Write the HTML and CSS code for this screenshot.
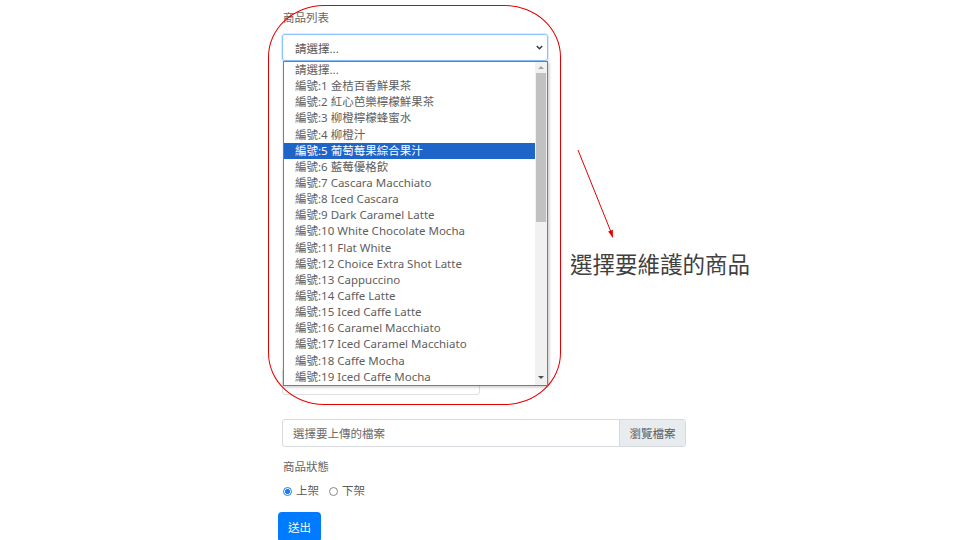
FILE: index.html
```html
<!DOCTYPE html>
<html lang="zh-Hant">
<head>
<meta charset="utf-8">
<title>商品維護</title>
<link rel="stylesheet" href="styles.css">
</head>
<body>
<main class="page">
  <form class="form">
    <label class="label label-top">商品列表</label>
    <div class="select-wrap">
      <div class="select">
        <span>請選擇...</span>
        <svg class="chev" width="7" height="5" viewBox="0 0 7 5"><path d="M0.8 1l2.7 2.7 2.7-2.7" fill="none" stroke="#343a40" stroke-width="1.5"/></svg>
      </div>
      <div class="dropdown">
        <ul class="options">
          <li>請選擇...</li>
          <li>編號:1 金桔百香鮮果茶</li>
          <li>編號:2 紅心芭樂檸檬鮮果茶</li>
          <li>編號:3 柳橙檸檬蜂蜜水</li>
          <li>編號:4 柳橙汁</li>
          <li class="selected">編號:5 葡萄莓果綜合果汁</li>
          <li>編號:6 藍莓優格飲</li>
          <li>編號:7 Cascara Macchiato</li>
          <li>編號:8 Iced Cascara</li>
          <li>編號:9 Dark Caramel Latte</li>
          <li>編號:10 White Chocolate Mocha</li>
          <li>編號:11 Flat White</li>
          <li>編號:12 Choice Extra Shot Latte</li>
          <li>編號:13 Cappuccino</li>
          <li>編號:14 Caffe Latte</li>
          <li>編號:15 Iced Caffe Latte</li>
          <li>編號:16 Caramel Macchiato</li>
          <li>編號:17 Iced Caramel Macchiato</li>
          <li>編號:18 Caffe Mocha</li>
          <li>編號:19 Iced Caffe Mocha</li>
        </ul>
        <div class="scrollbar">
          <span class="sb-arrow sb-up"></span>
          <span class="sb-thumb"></span>
          <span class="sb-arrow sb-down"></span>
        </div>
      </div>
    </div>
    <div class="covered-input"></div>
    <div class="file">
      <span class="file-text">選擇要上傳的檔案</span>
      <span class="file-btn">瀏覽檔案</span>
    </div>
    <label class="label label-status">商品狀態</label>
    <div class="radios">
      <label class="radio"><span class="dot checked"></span>上架</label>
      <label class="radio"><span class="dot"></span>下架</label>
    </div>
    <button type="button" class="submit">送出</button>
  </form>
  <div class="callout"></div>
  <svg class="pointer" width="960" height="540" viewBox="0 0 960 540">
    <line x1="578" y1="150" x2="610.6" y2="231" stroke="#e60000" stroke-width="1"/>
    <polygon points="613,238 612.8,229.8 608.2,231.6" fill="#e60000"/>
  </svg>
  <p class="caption">選擇要維護的商品</p>
</main>
</body>
</html>
```
FILE: styles.css
```css
* { box-sizing: border-box; }
html, body { margin: 0; padding: 0; background: #fff; }
body {
  font-family: "Noto Sans", "Noto Sans CJK TC", sans-serif;
  color: #555;
  width: 960px;
  height: 540px;
  overflow: hidden;
}
.page { position: relative; width: 960px; height: 540px; }
.form {
  display: flex;
  flex-direction: column;
  align-items: flex-start;
  padding-left: 282px;
}
.label {
  font-size: 11.5px;
  line-height: 16px;
  color: #666;
  padding-left: 1px;
}
.label-top { margin-top: 10px; }
.select-wrap {
  position: relative;
  margin-top: 8px;
  width: 266px;
  height: 27px;
}
.select {
  height: 27px;
  border: 1px solid #8cc3ff;
  border-radius: 3px;
  box-shadow: 0 0 0 1px rgba(140, 195, 255, 0.35);
  display: flex;
  align-items: center;
  justify-content: space-between;
  padding: 0 4px 0 12px;
  font-size: 11.5px;
  color: #555;
}
.chev { display: block; }
.dropdown {
  position: absolute;
  top: 27px;
  left: 1px;
  width: 265px;
  height: 325px;
  border: 1px solid #7d7d7d;
  background: #fff;
  display: flex;
  box-shadow: 1px 1px 3px rgba(0, 0, 0, 0.25);
  z-index: 2;
}
.options {
  list-style: none;
  margin: 0;
  padding: 0;
  flex: 1;
}
.options li {
  height: 16.15px;
  line-height: 16.15px;
  padding-left: 11px;
  font-size: 11.5px;
  color: #606060;
  white-space: nowrap;
}
.options li.selected { background: #1e64c9; color: #fff; }
.scrollbar {
  position: relative;
  width: 12px;
  background: #f1f1f1;
}
.sb-thumb {
  position: absolute;
  left: 1px;
  right: 1px;
  top: 11px;
  height: 149px;
  background: #c1c1c1;
}
.sb-arrow {
  position: absolute;
  left: 3px;
  width: 0;
  height: 0;
  border-left: 3px solid transparent;
  border-right: 3px solid transparent;
}
.sb-up { top: 4px; border-bottom: 3px solid #a3a3a3; }
.sb-down { bottom: 6px; border-top: 3px solid #505050; }
.covered-input {
  margin-top: 307px;
  width: 198px;
  height: 27px;
  border: 1px solid #dcdfe3;
  border-radius: 3px;
}
.file {
  margin-top: 24px;
  width: 404px;
  height: 28px;
  border: 1px solid #d6dadf;
  border-radius: 3px;
  display: flex;
  align-items: stretch;
  font-size: 11.5px;
  overflow: hidden;
}
.file-text {
  flex: 1;
  display: flex;
  align-items: center;
  padding-left: 10px;
  color: #6a6a6a;
}
.file-btn {
  width: 66px;
  display: flex;
  align-items: center;
  justify-content: center;
  background: #e9ecef;
  border-left: 1px solid #d6dadf;
  color: #5a5a5a;
}
.label-status { margin-top: 12px; }
.radios {
  margin-top: 8px;
  display: flex;
  gap: 9px;
  font-size: 11.5px;
  line-height: 16px;
  color: #5a5a5a;
}
.radio { display: flex; align-items: center; }
.dot {
  width: 9px;
  height: 9px;
  border: 1px solid #888;
  border-radius: 50%;
  margin: 0 4px 0 1px;
  background: #fff;
}
.dot.checked {
  border-color: #1a7cf0;
  background: radial-gradient(circle, #1a7cf0 0 2.2px, #fff 2.8px);
}
.submit {
  margin-top: 13px;
  margin-left: -4px;
  width: 43px;
  height: 30px;
  border: none;
  border-radius: 4px;
  background: #007bff;
  color: #fff;
  font-family: inherit;
  font-size: 11.5px;
  padding: 0;
}
.callout {
  position: absolute;
  left: 268px;
  top: 5px;
  width: 293px;
  height: 400px;
  border: 1px solid #e60000;
  border-radius: 56px / 52px;
  pointer-events: none;
}
.pointer {
  position: absolute;
  left: 0;
  top: 0;
  pointer-events: none;
}
.caption {
  position: absolute;
  left: 570px;
  top: 252px;
  margin: 0;
  font-size: 22.5px;
  line-height: 26px;
  color: #404040;
}
```
